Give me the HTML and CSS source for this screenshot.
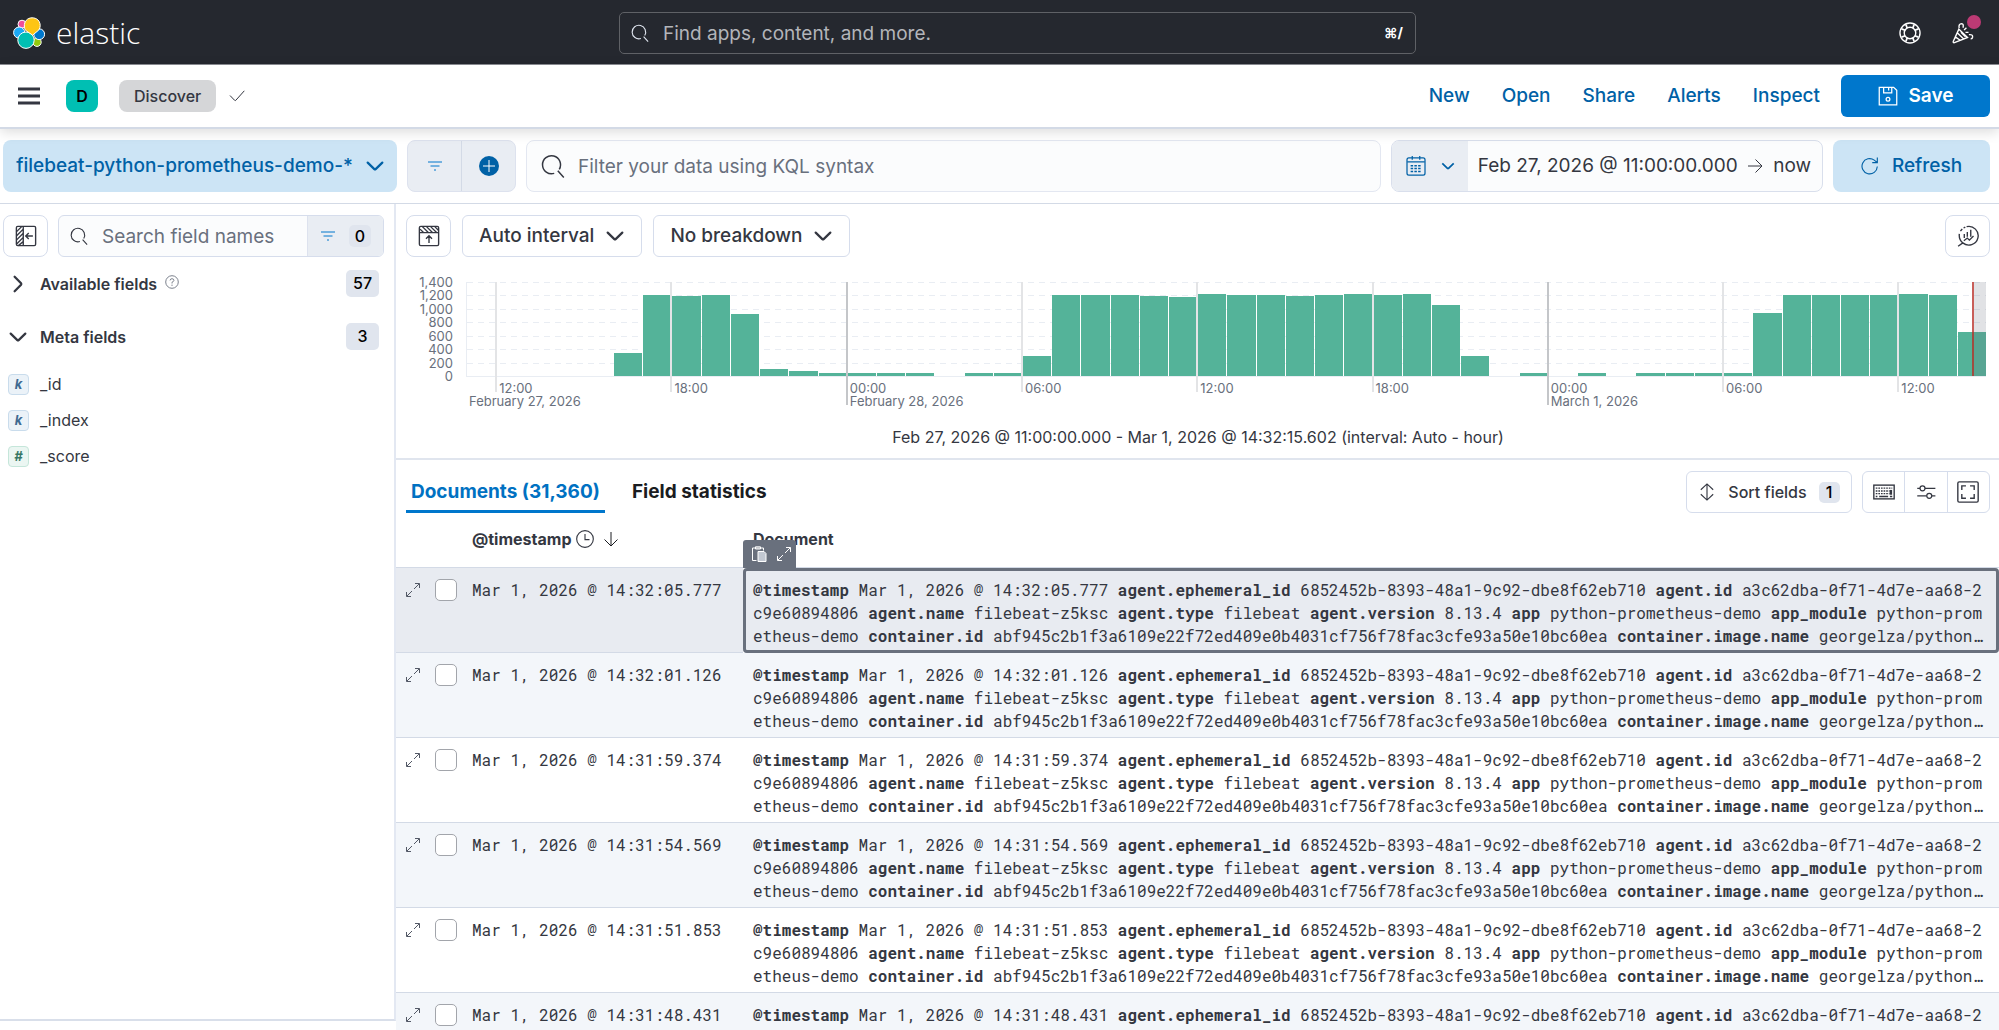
FILE: index.html
```html
<!DOCTYPE html>
<html lang="en">
<head>
<meta charset="utf-8">
<title>Discover - Elastic</title>
<link rel="stylesheet" href="styles.css">
</head>
<body>
<svg class="sprite" aria-hidden="true">
  <symbol id="i-search" viewBox="0 0 16 16"><path d="M8.8 12.9A6 6 0 1 1 12.2 10.2M11.2 11.2L15.2 15.6"/></symbol>
  <symbol id="i-down" viewBox="0 0 16 16"><path d="M1.5 5L7.4 10.7Q8 11.2 8.6 10.7L14.5 5"/></symbol>
  <symbol id="i-right" viewBox="0 0 16 16"><path d="M5 1.5L10.7 7.4Q11.2 8 10.7 8.6L5 14.5"/></symbol>
  <symbol id="i-filter" viewBox="0 0 16 16"><path d="M1 4H15M3.5 8H12.5M7 12H9"/></symbol>
  <symbol id="i-expand" viewBox="0 0 16 16"><path d="M10 1.5H14.5V6M14.2 1.8L9 7M7 9L1.8 14.2M1.5 10V14.5H6"/></symbol>
</svg>

<header class="top">
  <a class="brand" href="#" aria-label="Elastic home">
    <svg width="32" height="32" viewBox="0 0 32 32"><g stroke="#fff" stroke-width="1"><circle cx="9" cy="7.2" r="4" fill="#f04e98"/><circle cx="24" cy="25.2" r="4.2" fill="#93c90e"/><circle cx="6.2" cy="15.6" r="5.6" fill="#1ba9f5"/><circle cx="26.2" cy="17.2" r="5.4" fill="#0077cc"/><circle cx="13" cy="23.2" r="8.2" fill="#00bfb3"/><path fill="#fec514" d="M12.4 13.2C10.6 10 10.9 4.800 14.500 2.200 18-.2 23.600.500 26 4.200c1.600 2.700 1.700 6-.2 8.800L19.600 18.200z"/></g></svg>
    <span>elastic</span>
  </a>
  <label class="find">
    <svg class="ic s18"><use href="#i-search"/></svg>
    <input type="search" placeholder="Find apps, content, and more." aria-label="Find apps, content, and more">
    <kbd>⌘/</kbd>
  </label>
  <div class="top-actions">
    <button aria-label="Help"><svg class="ic s22" viewBox="0 0 16 16"><circle cx="8" cy="8" r="7.300"/><circle cx="8" cy="8" r="4.200"/><path stroke-width="1.300" d="M5 1.800L6 4.500M11 1.800L10 4.500M5 14.200L6 11.500M11 14.200L10 11.500M1.800 5L4.500 6M1.800 11L4.500 10M14.200 5L11.500 6M14.200 11L11.500 10"/></svg></button>
    <button class="news" aria-label="What's new"><svg class="ic s22" viewBox="0 0 16 16"><path d="M5 5.200L.9 14.200Q.7 15.300 1.800 15L11.300 11.200zM4 8L8.500 12.300M6.500 7.500L9.800 10.700M2.600 11L6 13.300M5.200 4.500Q4.600 1.300 7 1.200 8.700 1.400 8 4.200M8.800 5.800L10.500 4.200M9.800 7.500H12M12.300 9.200Q15.200 8.800 15 11 14.800 12.300 13.600 12.200"/></svg><i class="dot"></i></button>
  </div>
</header>

<nav class="bar">
  <button class="menu" aria-label="Menu"><svg width="22" height="18" viewBox="0 0 22 18"><path d="M0 2H22M0 9H22M0 16H22" stroke="#343741" stroke-width="3"/></svg></button>
  <button class="avatar" aria-label="Default space">D</button>
  <span class="crumb">Discover</span>
  <svg class="ic s16 check" viewBox="0 0 16 16"><path d="M1 7.500L5.600 12.300Q6.200 12.900 6.800 12.300L15.300 2.800"/></svg>
  <div class="links">
    <a href="#">New</a><a href="#">Open</a><a href="#">Share</a><a href="#">Alerts</a><a href="#">Inspect</a>
  </div>
  <button class="save"><svg class="ic s20" viewBox="0 0 16 16"><path d="M1 1H12.500L15 3.500V15H1zM4.500 1V5.500H11V1M8.500 1V3.500"/><circle cx="8" cy="10.500" r="1.500"/></svg>Save</button>
</nav>

<section class="query">
  <button class="dataview">filebeat-python-prometheus-demo-*<svg class="ic s18 bold"><use href="#i-down"/></svg></button>
  <div class="filters">
    <button aria-label="Saved queries"><svg class="ic s16"><use href="#i-filter"/></svg></button>
    <button aria-label="Add filter"><svg width="20" height="20" viewBox="0 0 20 20"><circle cx="10" cy="10" r="10" fill="#0061a6"/><path d="M10 4V16M4 10H16" stroke="#fff" stroke-width="1"/></svg></button>
  </div>
  <label class="kql"><svg class="ic s24"><use href="#i-search"/></svg><input type="text" placeholder="Filter your data using KQL syntax" aria-label="Query"></label>
  <div class="dates">
    <button class="cal" aria-label="Date quick select"><svg class="ic s20" viewBox="0 0 16 16"><rect x=".8" y="1.500" width="14.400" height="13.700" rx="1.500"/><path d="M1 4.700H15M5 0V3M11 0V3"/><path stroke-width="1.200" stroke-dasharray="2 1" d="M3.700 7.700H12.500M3.700 10H12.500M3.700 12.300H12.500"/></svg><svg class="ic s14 mid"><use href="#i-down"/></svg></button>
    <button class="when">Feb 27, 2026 @ 11:00:00.000</button>
    <svg class="ic s16" viewBox="0 0 16 16"><path d="M1 8H15M8.500 1.500L15 8 8.500 14.500"/></svg>
    <button class="when">now</button>
  </div>
  <button class="refresh"><svg class="ic s18" viewBox="0 0 16 16"><path d="M14.500 8.500A6.800 6.800 0 1 1 11.800 2.800L14.200 4.800M14.500.5V5H10"/></svg>Refresh</button>
</section>

<div class="body">
  <aside class="side">
    <div class="side-tools">
      <button class="sq" aria-label="Hide sidebar"><svg class="ic s22" viewBox="0 0 16 16"><rect x="1" y="1" width="14" height="14" rx="1"/><path d="M6 1V15M1 5L5 1M1 8L6 3M1 11L6 6M1 14L6 9M2.500 15L6 12M13 8H8M10 5.800L7.800 8 10 10.200"/></svg></button>
      <div class="fieldsearch">
        <label><svg class="ic s18"><use href="#i-search"/></svg><input type="search" placeholder="Search field names" aria-label="Search field names"></label>
        <button aria-label="Filter by type"><svg class="ic s16"><use href="#i-filter"/></svg><span>0</span></button>
      </div>
    </div>
    <button class="group"><svg class="ic s18 bold"><use href="#i-right"/></svg><b>Available fields</b><svg class="ic s14 help" viewBox="0 0 16 16"><circle cx="8" cy="8" r="7.200"/><path d="M5.800 6.200Q6 4.200 8 4.200 10.200 4.300 10.200 6.200 10 7.500 8 8.300V9.700M8 11V12.500"/></svg><span class="badge">57</span></button>
    <button class="group"><svg class="ic s18 bold"><use href="#i-down"/></svg><b>Meta fields</b><span class="badge">3</span></button>
    <ul class="fields">
      <li><i class="tok">k</i>_id</li>
      <li><i class="tok">k</i>_index</li>
      <li><i class="tok num">#</i>_score</li>
    </ul>
  </aside>

  <main class="main">
    <section class="hist">
      <div class="hist-tools">
        <button class="sq" aria-label="Hide chart"><svg class="ic s22" viewBox="0 0 16 16"><rect x="1" y="1" width="14" height="14" rx="1"/><path d="M1 5.500H15M1.500 3L4 5.500M3 1L7.500 5.500M6 1L10.500 5.500M9 1L13.500 5.500M12 1L15 4M8 13V8M5.800 10L8 7.800 10.200 10"/></svg></button>
        <button class="pick">Auto interval<svg class="ic s18 bold"><use href="#i-down"/></svg></button>
        <button class="pick">No breakdown<svg class="ic s18 bold"><use href="#i-down"/></svg></button>
        <button class="sq end" aria-label="Edit visualization"><svg class="ic s22" viewBox="0 0 16 16"><path d="M7 1.200A6.800 6.800 0 1 1 4.200 13L.8 15.500M4.200 13Q1.200 10.500 1.700 6.500M2.500 4.500L3.800 2.900M4.800 2.200L6 1.500M5.300 9.500V6.500M7.500 8.500V5M10 8.500V3.500M5 11.500L7.500 9.500 9 11 12 8"/></svg></button>
      </div>
      <div class="chart" role="img" aria-label="Documents per hour">
        <div class="yaxis"><span>1,400</span><span>1,200</span><span>1,000</span><span>800</span><span>600</span><span>400</span><span>200</span><span>0</span></div>
        <div class="plot">
          <div class="lines"><i></i><i></i><i></i><i></i><i></i><i></i><i></i></div>
          <div class="bars">
            <i></i><i></i><i></i><i></i><i></i><i style="height:25%"></i><i style="height:86%"></i><i style="height:85%"></i><i style="height:86%"></i><i style="height:66%"></i><i style="height:7%"></i><i style="height:5%"></i><i style="height:3%"></i><i style="height:3%"></i><i style="height:3%"></i><i style="height:3%"></i><i></i><i style="height:3%"></i><i style="height:3%"></i><i style="height:21%"></i><i style="height:86%"></i><i style="height:86%"></i><i style="height:86%"></i><i style="height:85%"></i><i style="height:84%"></i><i style="height:87%"></i><i style="height:86%"></i><i style="height:86%"></i><i style="height:85%"></i><i style="height:86%"></i><i style="height:87%"></i><i style="height:86%"></i><i style="height:87%"></i><i style="height:76%"></i><i style="height:21%"></i><i></i><i style="height:3%"></i><i></i><i style="height:3%"></i><i></i><i style="height:3%"></i><i style="height:3%"></i><i style="height:3%"></i><i style="height:3%"></i><i style="height:67%"></i><i style="height:86%"></i><i style="height:86%"></i><i style="height:86%"></i><i style="height:86%"></i><i style="height:87%"></i><i style="height:86%"></i><i style="height:47%"></i>
          </div>
          <div class="ticks">
            <span class="first" style="grid-column:1 / span 6"><br>February 27, 2026</span>
            <span style="grid-column:2 / span 6">12:00</span>
            <span style="grid-column:8 / span 6">18:00</span>
            <span class="day" style="grid-column:14 / span 6">00:00<br>February 28, 2026</span>
            <span style="grid-column:20 / span 6">06:00</span>
            <span style="grid-column:26 / span 6">12:00</span>
            <span style="grid-column:32 / span 6">18:00</span>
            <span class="day" style="grid-column:38 / span 6">00:00<br>March 1, 2026</span>
            <span style="grid-column:44 / span 6">06:00</span>
            <span style="grid-column:50 / span 3">12:00</span>
          </div>
          <div class="now"></div>
        </div>
      </div>
      <p class="range">Feb 27, 2026 @ 11:00:00.000 - Mar 1, 2026 @ 14:32:15.602 (interval: Auto - hour)</p>
    </section>

    <section class="docs">
      <div class="tabs">
        <button class="tab on">Documents (31,360)</button>
        <button class="tab">Field statistics</button>
        <div class="grid-tools">
          <button class="sort"><svg class="ic s18" viewBox="0 0 16 16"><path d="M8 .8V15.200M2.500 6L8 .8 13.500 6M2.500 10L8 15.200 13.500 10"/></svg>Sort fields<span>1</span></button>
          <div class="trio">
            <button aria-label="Keyboard shortcuts"><svg class="ic s22" viewBox="0 0 16 16"><rect x=".6" y="3" width="14.800" height="10"/><path stroke-dasharray="1.200 .7" d="M2 5.200H14M2 7.300H12M2 9.200H12"/><path d="M2 11.300H3.200M4.500 11.300H11M12.300 11.300H14"/><path stroke-width="1.800" d="M13 6.500V10"/></svg></button>
            <button aria-label="Display options"><svg class="ic s20" viewBox="0 0 16 16"><path d="M1 5H3.200M7.200 5H15.500M1 11H8.500M12.700 11H15.500"/><circle cx="5.200" cy="5" r="2"/><circle cx="10.600" cy="11" r="2"/></svg></button>
            <button aria-label="Full screen"><svg class="ic s22" viewBox="0 0 16 16"><rect x=".6" y=".6" width="14.800" height="14.800" rx="1"/><path d="M3.500 6.500V3.500H6.500M9.500 3.500H12.500V6.500M12.500 9.500V12.500H9.500M6.500 12.500H3.500V9.500"/></svg></button>
          </div>
        </div>
      </div>
      <table class="grid">
        <colgroup><col class="c1"><col class="c2"><col class="c3"><col></colgroup>
        <thead><tr><th></th><th></th>
          <th scope="col"><div class="colhead">@timestamp<svg class="ic s18" viewBox="0 0 16 16"><circle cx="8" cy="8" r="7.400"/><path d="M8 3.500V8.500H12"/></svg><svg class="ic s16 dark" viewBox="0 0 16 16"><path d="M8 1V15M1.500 8.500L8 15 14.500 8.500"/></svg></div></th>
          <th scope="col">Document</th></tr></thead>
        <tbody>
          <tr class="active"><td><button class="open" aria-label="Expand row"><svg class="ic s16"><use href="#i-expand"/></svg></button></td><td><input type="checkbox" aria-label="Select row"></td><td>Mar 1, 2026 @ 14:32:05.777</td>
            <td class="cell"><div class="cell-actions"><button aria-label="Copy"><svg class="ic s16" viewBox="0 0 16 16"><path d="M5.500 14.500H1.500V2H12.500V4.500M4.500.8H9.500V3H4.500z"/><path fill="#c2c8d2" d="M7 5.500H13L15 7.500V15.500H7z"/></svg></button><button aria-label="Expand cell"><svg class="ic s16"><use href="#i-expand"/></svg></button></div>
              <div class="src"><b>@timestamp</b> Mar 1, 2026 @ 14:32:05.777 <b>agent.ephemeral_id</b> 6852452b-8393-48a1-9c92-dbe8f62eb710 <b>agent.id</b> a3c62dba-0f71-4d7e-aa68-2c9e60894806 <b>agent.name</b> filebeat-z5ksc <b>agent.type</b> filebeat <b>agent.version</b> 8.13.4 <b>app</b> python-prometheus-demo <b>app_module</b> python-prometheus-demo <b>container.id</b> abf945c2b1f3a6109e22f72ed409e0b4031cf756f78fac3cfe93a50e10bc60ea <b>container.image.name</b> georgelza/python…</div></td></tr>
          <tr><td><button class="open" aria-label="Expand row"><svg class="ic s16"><use href="#i-expand"/></svg></button></td><td><input type="checkbox" aria-label="Select row"></td><td>Mar 1, 2026 @ 14:32:01.126</td>
            <td><div class="src"><b>@timestamp</b> Mar 1, 2026 @ 14:32:01.126 <b>agent.ephemeral_id</b> 6852452b-8393-48a1-9c92-dbe8f62eb710 <b>agent.id</b> a3c62dba-0f71-4d7e-aa68-2c9e60894806 <b>agent.name</b> filebeat-z5ksc <b>agent.type</b> filebeat <b>agent.version</b> 8.13.4 <b>app</b> python-prometheus-demo <b>app_module</b> python-prometheus-demo <b>container.id</b> abf945c2b1f3a6109e22f72ed409e0b4031cf756f78fac3cfe93a50e10bc60ea <b>container.image.name</b> georgelza/python…</div></td></tr>
          <tr><td><button class="open" aria-label="Expand row"><svg class="ic s16"><use href="#i-expand"/></svg></button></td><td><input type="checkbox" aria-label="Select row"></td><td>Mar 1, 2026 @ 14:31:59.374</td>
            <td><div class="src"><b>@timestamp</b> Mar 1, 2026 @ 14:31:59.374 <b>agent.ephemeral_id</b> 6852452b-8393-48a1-9c92-dbe8f62eb710 <b>agent.id</b> a3c62dba-0f71-4d7e-aa68-2c9e60894806 <b>agent.name</b> filebeat-z5ksc <b>agent.type</b> filebeat <b>agent.version</b> 8.13.4 <b>app</b> python-prometheus-demo <b>app_module</b> python-prometheus-demo <b>container.id</b> abf945c2b1f3a6109e22f72ed409e0b4031cf756f78fac3cfe93a50e10bc60ea <b>container.image.name</b> georgelza/python…</div></td></tr>
          <tr><td><button class="open" aria-label="Expand row"><svg class="ic s16"><use href="#i-expand"/></svg></button></td><td><input type="checkbox" aria-label="Select row"></td><td>Mar 1, 2026 @ 14:31:54.569</td>
            <td><div class="src"><b>@timestamp</b> Mar 1, 2026 @ 14:31:54.569 <b>agent.ephemeral_id</b> 6852452b-8393-48a1-9c92-dbe8f62eb710 <b>agent.id</b> a3c62dba-0f71-4d7e-aa68-2c9e60894806 <b>agent.name</b> filebeat-z5ksc <b>agent.type</b> filebeat <b>agent.version</b> 8.13.4 <b>app</b> python-prometheus-demo <b>app_module</b> python-prometheus-demo <b>container.id</b> abf945c2b1f3a6109e22f72ed409e0b4031cf756f78fac3cfe93a50e10bc60ea <b>container.image.name</b> georgelza/python…</div></td></tr>
          <tr><td><button class="open" aria-label="Expand row"><svg class="ic s16"><use href="#i-expand"/></svg></button></td><td><input type="checkbox" aria-label="Select row"></td><td>Mar 1, 2026 @ 14:31:51.853</td>
            <td><div class="src"><b>@timestamp</b> Mar 1, 2026 @ 14:31:51.853 <b>agent.ephemeral_id</b> 6852452b-8393-48a1-9c92-dbe8f62eb710 <b>agent.id</b> a3c62dba-0f71-4d7e-aa68-2c9e60894806 <b>agent.name</b> filebeat-z5ksc <b>agent.type</b> filebeat <b>agent.version</b> 8.13.4 <b>app</b> python-prometheus-demo <b>app_module</b> python-prometheus-demo <b>container.id</b> abf945c2b1f3a6109e22f72ed409e0b4031cf756f78fac3cfe93a50e10bc60ea <b>container.image.name</b> georgelza/python…</div></td></tr>
          <tr><td><button class="open" aria-label="Expand row"><svg class="ic s16"><use href="#i-expand"/></svg></button></td><td><input type="checkbox" aria-label="Select row"></td><td>Mar 1, 2026 @ 14:31:48.431</td>
            <td><div class="src"><b>@timestamp</b> Mar 1, 2026 @ 14:31:48.431 <b>agent.ephemeral_id</b> 6852452b-8393-48a1-9c92-dbe8f62eb710 <b>agent.id</b> a3c62dba-0f71-4d7e-aa68-2c9e60894806 <b>agent.name</b> filebeat-z5ksc <b>agent.type</b> filebeat <b>agent.version</b> 8.13.4 <b>app</b> python-prometheus-demo <b>app_module</b> python-prometheus-demo <b>container.id</b> abf945c2b1f3a6109e22f72ed409e0b4031cf756f78fac3cfe93a50e10bc60ea <b>container.image.name</b> georgelza/python…</div></td></tr>
        </tbody>
      </table>
    </section>
  </main>
</div>
</body>
</html>
```
FILE: styles.css
```css
* { box-sizing: border-box; }
body {
  margin: 0;
  height: 100vh;
  display: flex;
  flex-direction: column;
  overflow: hidden;
  background: #fff;
  color: #343741;
  font: 400 19px/24px Inter, "Liberation Sans", sans-serif;
}
button, input { font: inherit; color: inherit; }
button {
  display: flex;
  align-items: center;
  justify-content: center;
  padding: 0;
  border: 0;
  background: none;
  cursor: pointer;
  white-space: nowrap;
}
input { min-width: 0; border: 0; padding: 1px 0 0; background: none; outline: 0; }
input::placeholder { color: #69707d; opacity: 1; }
a { text-decoration: none; }
.sprite { display: none; }

/* icons */
.ic { flex: none; fill: none; stroke: currentColor; stroke-width: 1; }
.s14 { width: 14px; height: 14px; }
.s16 { width: 16px; height: 16px; }
.s18 { width: 18px; height: 18px; }
.s20 { width: 20px; height: 20px; }
.s22 { width: 22px; height: 22px; }
.s24 { width: 24px; height: 24px; }
.bold { stroke-width: 2; stroke-linecap: round; }
.mid { stroke-width: 2; }

/* global header */
.top {
  flex: none;
  height: 65px;
  display: grid;
  grid-template-columns: 619fr 797fr 583fr;
  align-items: center;
  padding-top: 2px;
  background: #25282f;
  border-bottom: 1px solid #8d8f95;
  color: #fff;
}
.brand { display: flex; align-items: center; gap: 11px; padding-left: 13px; color: #fff; }
.brand span { font: 300 30px/32px "Open Sans", sans-serif; }
.find {
  height: 42px;
  display: flex;
  align-items: center;
  gap: 14px;
  padding: 0 12px 0 11px;
  border: 1px solid #5f6166;
  border-radius: 5px;
  color: #dfe5ef;
}
.find input { flex: 1; }
.find input::placeholder { color: #b3b5ba; }
.find kbd { font: 700 14px/18px Inter, "DejaVu Sans", sans-serif; color: #fff; }
.top-actions { display: flex; justify-content: flex-end; gap: 31px; padding-right: 25px; }
.news { position: relative; }
.dot { position: absolute; top: -7px; right: -7px; width: 14px; height: 14px; border-radius: 50%; background: #bc3a74; }

/* application bar */
.bar {
  flex: none;
  position: relative;
  height: 64px;
  display: flex;
  align-items: center;
  padding: 0 9px 0 18px;
  background: #fff;
  border-bottom: 2px solid #d3dae6;
  box-shadow: 0 3px 12px rgba(0, 0, 0, .14);
}
.avatar {
  width: 32px;
  height: 32px;
  margin-left: 26px;
  border-radius: 8px;
  background: #00bfb3;
  color: #000;
  font-size: 16px;
  font-weight: 600;
}
.crumb {
  margin: 0 13px 0 21px;
  padding: 4px 15px;
  border-radius: 8px;
  background: #d5d6d8;
  font-size: 16px;
  font-weight: 500;
}
.links { display: flex; gap: 32px; margin: 0 21px 0 auto; font-weight: 500; }
.links a { color: #0061a6; }
.save {
  width: 149px;
  height: 42px;
  gap: 11px;
  border-radius: 6px;
  background: #0077cc;
  color: #fff;
  font-weight: 600;
}

/* query bar */
.query {
  flex: none;
  display: flex;
  gap: 10px;
  padding: 11px 9px 11px 3px;
  border-bottom: 1px solid #d3dae6;
}
.query > * { height: 52px; }
.dataview, .refresh { border-radius: 8px; background: #cce4f5; color: #0061a6; font-weight: 500; }
.dataview { width: 394px; gap: 13px; }
.refresh { width: 157px; gap: 13px; }
.filters { display: flex; width: 109px; border: 1px solid #dde2ee; border-radius: 8px; background: #e9edf3; color: #0077cc; }
.filters button { flex: 1; }
.filters button + button { border-left: 1px solid #d3dae6; }
.kql {
  flex: 1;
  display: flex;
  align-items: center;
  gap: 13px;
  padding: 0 14px;
  border: 1px solid #e3e7f1;
  border-radius: 8px;
  background: #fbfcfd;
}
.kql input { flex: 1; }
.dates {
  width: 432px;
  display: flex;
  align-items: center;
  justify-content: space-between;
  padding-right: 11px;
  border: 1px solid #d9dfec;
  border-radius: 8px;
  background: #fbfcfd;
  overflow: hidden;
}
.cal { width: 76px; height: 100%; gap: 15px; background: #e9edf3; color: #0061a6; }

/* page body */
.body { flex: 1; min-height: 0; display: flex; }
.side {
  flex: none;
  width: 396px;
  margin-bottom: 9px;
  border-right: 2px solid #e3e8f2;
  border-bottom: 2px solid #d9dfea;
}
.side-tools { display: flex; gap: 10px; padding: 11px 10px 0 3px; }
.sq { width: 45px; height: 42px; border: 1px solid #d6ddec; border-radius: 8px; background: #fff; }
.fieldsearch {
  flex: 1;
  height: 42px;
  display: flex;
  border: 1px solid #d6ddec;
  border-radius: 6px;
  background: #fbfcfd;
  overflow: hidden;
}
.fieldsearch label { flex: 1; min-width: 0; display: flex; align-items: center; gap: 14px; padding-left: 11px; }
.fieldsearch input { flex: 1; width: 100%; }
.fieldsearch button { width: 76px; gap: 13px; background: #e9edf3; border-left: 1px solid #dde2ee; color: #0077cc; }
.fieldsearch span { width: 22px; border-radius: 5px; background: #e0e5ee; color: #000; font-size: 16px; font-weight: 500; line-height: 22px; }
.group { width: 100%; height: 53px; justify-content: flex-start; padding: 0 15px 0 9px; font-size: 16px; }
.group b { margin: 0 8px 0 13px; font-weight: 600; }
.help { color: #69707d; margin-bottom: 4px; }
.badge { margin-left: auto; width: 33px; border-radius: 5px; background: #e0e5ee; color: #000; font-weight: 500; line-height: 27px; }
.fields { list-style: none; margin: 3px 0 0; padding: 0 8px; font-size: 16px; }
.fields li { height: 36px; display: flex; align-items: center; gap: 11px; }
.tok {
  width: 21px;
  height: 21px;
  border: 1px solid #c9dcec;
  border-radius: 4px;
  background: #ebf2f8;
  color: #3f6a91;
  font-size: 13px;
  font-weight: 700;
  line-height: 19px;
  text-align: center;
}
.tok.num { border-color: #c5e6da; background: #ebf6f2; color: #387765; }

/* histogram */
.main { flex: 1; min-width: 0; display: flex; flex-direction: column; overflow: hidden; }
.hist { flex: none; padding: 11px 9px 9px 10px; border-bottom: 2px solid #e0e5ee; }
.hist-tools { display: flex; gap: 11px; }
.hist-tools .end { margin-left: auto; }
.pick { height: 42px; gap: 12px; padding: 0 17px 0 16px; border: 1px solid #d6ddec; border-radius: 6px; font-weight: 500; }
.chart { display: flex; gap: 13px; padding: 25px 4px 0 0; color: #69707d; font-size: 13px; line-height: 13px; }
.yaxis { width: 47px; height: 107px; margin-top: -6px; display: flex; flex-direction: column; justify-content: space-between; align-items: flex-end; }
.plot { flex: 1; position: relative; height: 95px; border-left: 1px solid #e9edf3; border-bottom: 1px solid #e9edf3; }
.lines { position: absolute; inset: 0; display: grid; grid-template-rows: repeat(7, 1fr); }
.lines i { height: 1px; background: repeating-linear-gradient(90deg, #e9edf3 0 6px, transparent 6px 11px); }
.bars { position: absolute; inset: 0; display: grid; grid-template-columns: repeat(52, 1fr); align-items: end; }
.bars i { margin-left: 1px; background: #54b399; }
.ticks { position: absolute; inset: 0 0 -30px; display: grid; grid-template-columns: repeat(52, 1fr); align-items: start; white-space: nowrap; }
.ticks span { grid-row: 1; height: 110px; margin-left: -1px; padding: 100px 0 0 2px; border-left: 2px solid #e3e4e6; }
.ticks .day { height: 123px; border-left-color: #c4c6c9; }
.ticks .first { border-color: transparent; padding-left: 1px; }
.now { position: absolute; top: 0; bottom: 0; right: 0; width: 14px; border-left: 2px solid rgba(189, 39, 30, .7); background: rgba(105, 112, 125, .2); }
.range { margin: 42px 0 0; text-align: center; font-size: 16px; line-height: 24px; }

/* document table */
.docs { flex: 1; min-height: 0; overflow: hidden; }
.tabs { display: flex; align-items: stretch; gap: 22px; padding: 11px 9px 0 10px; }
.tab { height: 42px; padding: 0 5px; border: solid transparent; border-width: 3px 0; color: #1a1c21; font-weight: 700; }
.tab.on { color: #0071c2; border-bottom-color: #0077cc; }
.grid-tools { display: flex; gap: 10px; margin-left: auto; font-size: 16px; font-weight: 500; }
.sort { width: 166px; height: 42px; gap: 12px; border: 1px solid #d6ddec; border-radius: 6px; }
.sort span { width: 21px; border-radius: 5px; background: #e0e5ee; color: #000; line-height: 21px; }
.trio { width: 128px; height: 42px; display: flex; border: 1px solid #d6ddec; border-radius: 6px; }
.trio button { flex: 1; }
.trio button + button { border-left: 1px solid #d6ddec; }
.grid { width: 100%; table-layout: fixed; border-collapse: separate; border-spacing: 0; }
.c1 { width: 34px; }
.c2 { width: 32px; }
.c3 { width: 281px; }
th { height: 55px; padding: 0 10px 2px; text-align: left; font-size: 16px; font-weight: 700; border-bottom: 1px solid #d3dae6; }
.colhead { display: flex; align-items: center; gap: 5px; }
.dark { margin-left: 4px; stroke-width: 1; color: #1a1c21; }
td {
  height: 85px;
  padding: 10px 10px 5px;
  vertical-align: top;
  border-bottom: 1px solid #d3dae6;
  font: 400 16px/23px "Roboto Mono", "Liberation Mono", monospace;
  white-space: nowrap;
}
tbody tr:nth-child(even) td { background: #f3f6fa; }
tbody tr.active td { background: #e8ebf1; }
td:nth-child(-n+2) { padding: 11px 0 0 5px; }
.open { height: 22px; margin-left: 4px; color: #535966; }
input[type="checkbox"] {
  appearance: none;
  display: block;
  width: 22px;
  height: 22px;
  margin: 0;
  border: 1px solid #a2a5ab;
  border-radius: 5px;
  background: #fff;
}
.src {
  white-space: normal;
  word-break: break-all;
}
.src b { font-weight: 700; }
.cell { position: relative; outline: 3px solid #69707d; outline-offset: -3px; border-radius: 4px; }
.cell-actions {
  position: absolute;
  left: 0;
  bottom: 100%;
  width: 53px;
  height: 28px;
  display: flex;
  align-items: center;
  justify-content: space-between;
  padding: 0 4px 0 8px;
  border-radius: 3px 3px 0 0;
  background: #69707d;
  color: #fff;
}
```
